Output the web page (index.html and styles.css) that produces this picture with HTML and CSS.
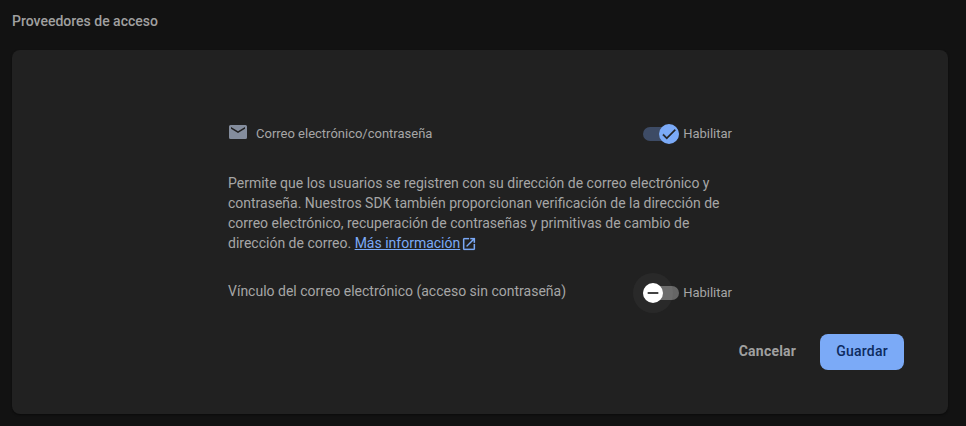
FILE: index.html
```html
<!DOCTYPE html>
<html lang="es">
<head>
<meta charset="utf-8">
<title>Proveedores de acceso</title>
<link rel="stylesheet" href="styles.css">
</head>
<body>
<h1 class="title">Proveedores de acceso</h1>
<main class="card">
  <div class="row provider">
    <div class="name">
      <svg class="mail" viewBox="0 0 18 14"><path fill-rule="evenodd" d="M1.500 0h15Q18 0 18 1.500v11q0 1.500-1.500 1.500h-15Q0 14 0 12.500v-11Q0 0 1.500 0zM2 2v1.700L9 8l7-4.300V2L9 6.300z"/></svg>
      <span>Correo electrónico/contraseña</span>
    </div>
    <div class="switch on">
      <span class="track"><span class="thumb"><svg viewBox="0 0 24 24"><path d="M9 16.170 4.830 12l-1.420 1.410L9 19 21 7l-1.410-1.410z"/></svg></span></span>
      <span>Habilitar</span>
    </div>
  </div>
  <p class="text">Permite que los usuarios se registren con su dirección de correo electrónico y contraseña. Nuestros SDK también proporcionan verificación de la dirección de correo electrónico, recuperación de contraseñas y primitivas de cambio de dirección de correo. <a href="#">Más información<svg class="open" viewBox="0 0 24 24"><path d="M19 19H5V5h7V3H5c-1.110 0-2 .9-2 2v14c0 1.100.89 2 2 2h14c1.100 0 2-.9 2-2v-7h-2v7zM14 3v2h3.590l-9.830 9.830 1.410 1.410L19 6.410V10h2V3h-7z"/></svg></a></p>
  <div class="row link-row">
    <span class="label">Vínculo del correo electrónico (acceso sin contraseña)</span>
    <div class="switch off">
      <span class="track"><span class="thumb"><svg viewBox="0 0 24 24"><path d="M4 10.500h16v3H4z"/></svg></span></span>
      <span>Habilitar</span>
    </div>
  </div>
  <div class="actions">
    <button class="cancel">Cancelar</button>
    <button class="save">Guardar</button>
  </div>
</main>
</body>
</html>
```
FILE: styles.css
```css
* { box-sizing: border-box; }
body { margin: 0; padding: 11px 18px 0 12px; height: 426px; overflow: hidden; background: #121212; color: #a6a6a6; font: 14px/20px Roboto, sans-serif; }
.title { margin: 0 0 19px; font-size: 14px; line-height: 20px; font-weight: 500; color: #a0a0a0; }
.card { height: 364px; padding: 74px 44px 43px 216px; border-radius: 8px; background: #212121; box-shadow: 0 1px 2px #0b0b0b; }
.row { display: flex; justify-content: space-between; width: 504px; height: 20px; align-items: center; font-size: 13px; }
.name { display: flex; align-items: center; gap: 9px; }
.mail { width: 18px; height: 14px; margin: 0 0 4px 1px; fill: #848d9d; }
.switch { display: flex; align-items: center; gap: 4px; }
.track { display: block; position: relative; width: 36px; height: 14px; border-radius: 7px; background: #666; }
.on .track { background: #3d4b65; }
.thumb { position: absolute; left: 0; top: -3px; width: 20px; height: 20px; border-radius: 50%; background: #fff; display: flex; align-items: center; justify-content: center; }
.thumb svg { width: 16px; height: 16px; fill: #424242; }
.on .thumb svg { width: 18px; height: 18px; fill: #212121; stroke: #212121; stroke-width: .4; }
.on .thumb { left: 16px; background: #7baaf7; }
.off .thumb { box-shadow: 0 0 0 10px rgba(255, 255, 255, .04); }
.text { width: 504px; margin: 29px 0 30px; }
.text a { color: #7baaf7; }
.open { width: 16px; height: 16px; margin-left: 1px; fill: currentColor; stroke: currentColor; stroke-width: .3; vertical-align: -4px; }
.label { font-size: 14px; position: relative; top: -2px; }
.actions { display: flex; justify-content: flex-end; gap: 8px; margin-top: 31px; }
button { height: 36px; padding: 0 16px 1px; border: 0; border-radius: 8px; background: none; color: #a0a0a0; font: 500 14px/35px Roboto, sans-serif; letter-spacing: .25px; }
.cancel { font-weight: 700; letter-spacing: .22px; }
.save { background: #7baaf7; color: #0d2b5e; }
```
